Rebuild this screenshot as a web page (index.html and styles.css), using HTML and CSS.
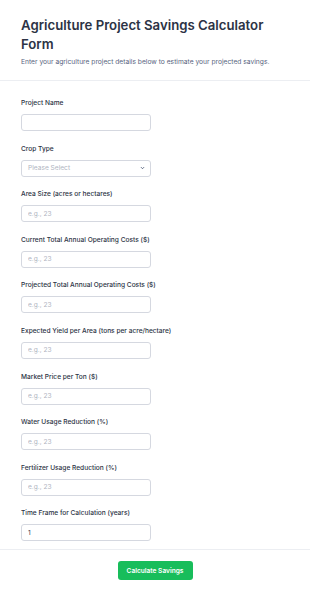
FILE: index.html
```html
<!DOCTYPE html>
<html lang="en">
<head>
    <meta charset="UTF-8">
    <meta name="viewport" content="width=device-width, initial-scale=1.0">
    <title>Agriculture Project Savings Calculator Form</title>
    <link rel="stylesheet" href="styles.css">
</head>
<body>
    <div class="form-header">
        <h1>Agriculture Project Savings Calculator Form</h1>
        <p class="subtitle">Enter your agriculture project details below to estimate your projected savings.</p>
    </div>

    <form class="form-body">
        <div class="field">
            <label>Project Name</label>
            <input type="text" class="input">
        </div>
        <div class="field">
            <label>Crop Type</label>
            <div class="select">
                <span>Please Select</span>
                <svg width="5" height="4" viewBox="0 0 5 4"><path d="M1 1.2 L2.5 2.7 L4 1.2" fill="none" stroke="#57647e" stroke-width="1"/></svg>
            </div>
        </div>
        <div class="field">
            <label>Area Size (acres or hectares)</label>
            <input type="text" class="input" placeholder="e.g., 23">
        </div>
        <div class="field">
            <label>Current Total Annual Operating Costs ($)</label>
            <input type="text" class="input" placeholder="e.g., 23">
        </div>
        <div class="field">
            <label>Projected Total Annual Operating Costs ($)</label>
            <input type="text" class="input" placeholder="e.g., 23">
        </div>
        <div class="field">
            <label>Expected Yield per Area (tons per acre/hectare)</label>
            <input type="text" class="input" placeholder="e.g., 23">
        </div>
        <div class="field">
            <label>Market Price per Ton ($)</label>
            <input type="text" class="input" placeholder="e.g., 23">
        </div>
        <div class="field">
            <label>Water Usage Reduction (%)</label>
            <input type="text" class="input" placeholder="e.g., 23">
        </div>
        <div class="field">
            <label>Fertilizer Usage Reduction (%)</label>
            <input type="text" class="input" placeholder="e.g., 23">
        </div>
        <div class="field">
            <label>Time Frame for Calculation (years)</label>
            <input type="text" class="input" value="1">
        </div>
    </form>

    <div class="form-footer">
        <button type="button" class="submit">Calculate Savings</button>
    </div>
</body>
</html>
```

FILE: styles.css
```css
body {
    margin: 0;
    font-family: Inter, "Noto Sans", sans-serif;
    color: #2c3345;
    background: #fff;
}

.form-header {
    padding: 16px 21px 14px;
    border-bottom: 1px solid #eceef2;
}

h1 {
    margin: 0;
    font-size: 13.2px;
    font-weight: 600;
    line-height: 19px;
}

.subtitle {
    margin: 4px 0 0;
    font-size: 6.7px;
    color: #57647e;
}

.form-body {
    padding: 18px 21px 8px;
    display: flex;
    flex-direction: column;
    gap: 13.6px;
    border-bottom: 1px solid #eceef2;
}

.field {
    display: flex;
    flex-direction: column;
    gap: 6px;
}

label {
    font-size: 6.6px;
    font-weight: 500;
    line-height: 9px;
}

.input,
.select {
    box-sizing: border-box;
    width: 130px;
    height: 17px;
    margin: 0;
    padding: 0 5px 0 6px;
    border: 1px solid #d5d8e0;
    border-radius: 3px;
    font-family: inherit;
    font-size: 6.6px;
    color: #2c3345;
    background: #fff;
}

.input::placeholder {
    color: #b0b5c1;
}

.select {
    display: flex;
    align-items: center;
    justify-content: space-between;
    color: #b0b5c1;
}

.form-footer {
    display: flex;
    justify-content: center;
    padding: 11px 0;
}

.submit {
    width: 75px;
    height: 19px;
    border: none;
    border-radius: 3px;
    background: #18bd5b;
    color: #fff;
    font-family: inherit;
    font-size: 6.6px;
    font-weight: 600;
}
```
